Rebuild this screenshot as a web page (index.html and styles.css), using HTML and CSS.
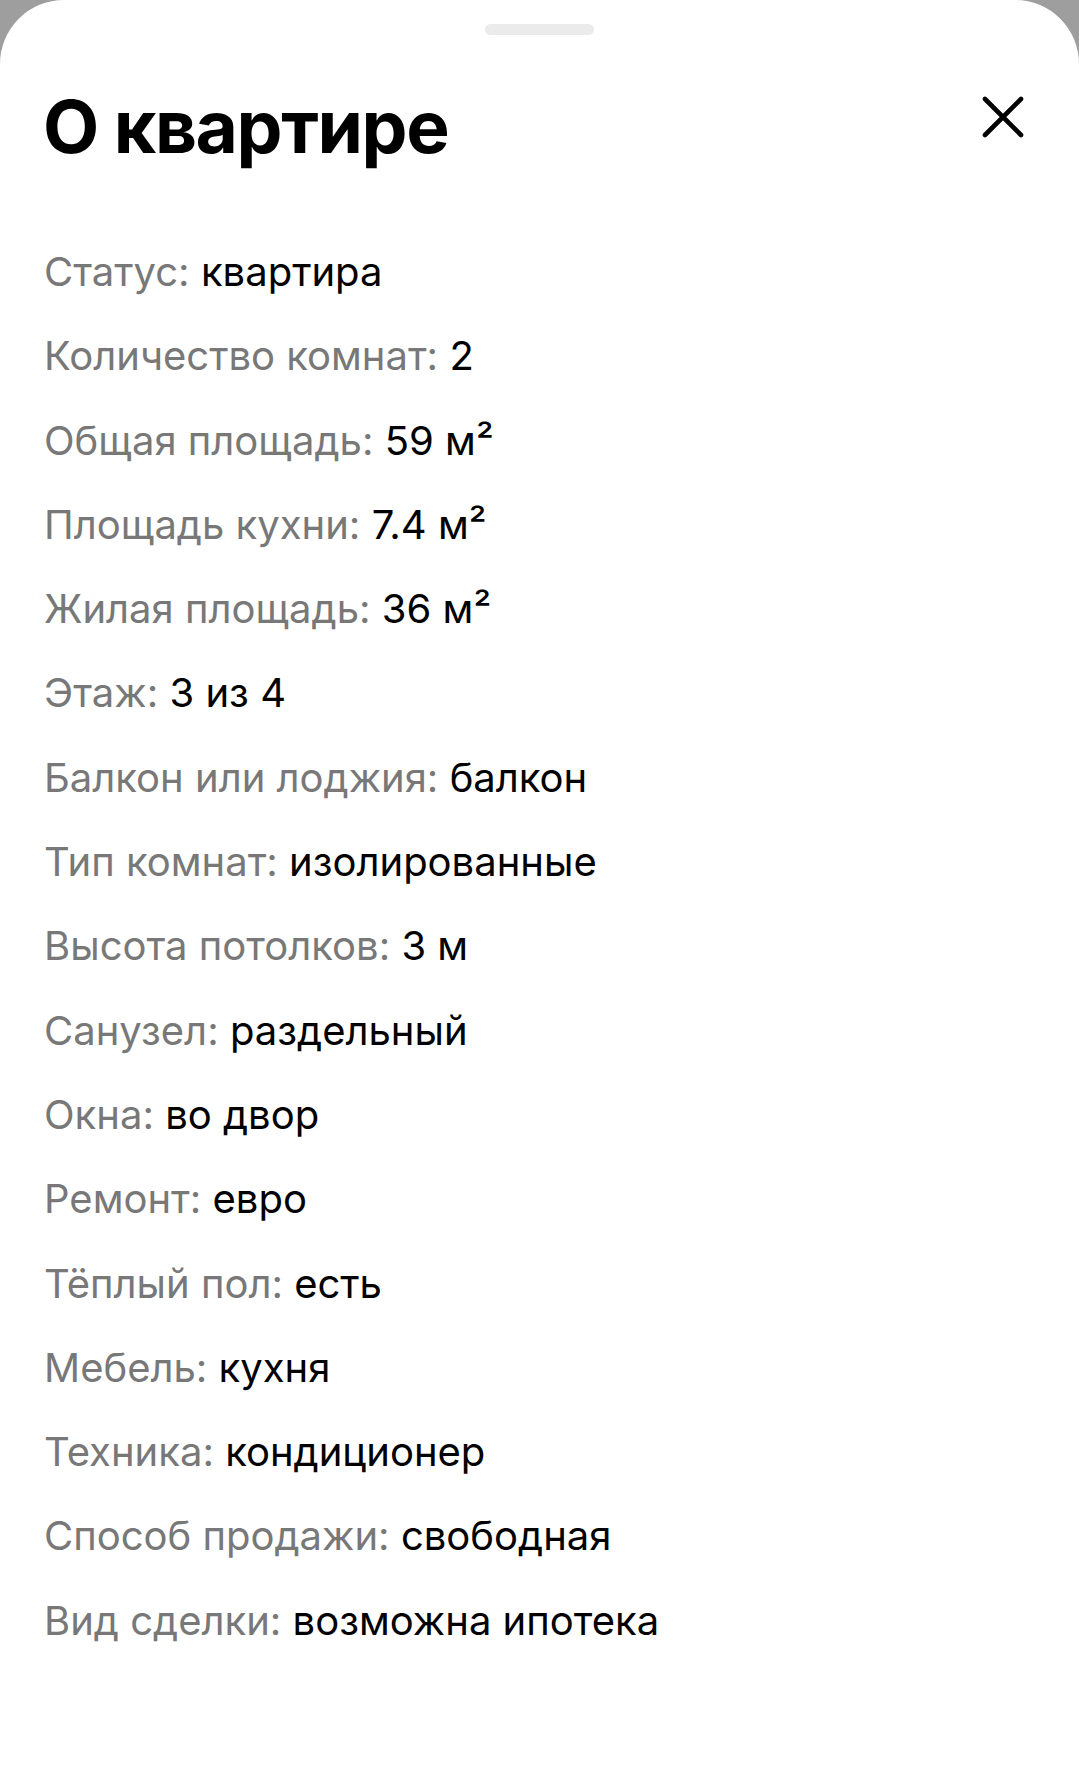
FILE: index.html
```html
<!DOCTYPE html>
<html lang="ru">
<head>
<meta charset="utf-8">
<title>О квартире</title>
<link rel="stylesheet" href="styles.css">
</head>
<body>
<div class="sheet">
  <div class="handle"></div>
  <div class="header">
    <h1 class="title">О квартире</h1>
    <button class="close" aria-label="Закрыть">
      <svg width="42" height="42" viewBox="0 0 42 42"><path d="M3 3 L39 39 M39 3 L3 39" stroke="#000" stroke-width="4.6" stroke-linecap="round" fill="none"/></svg>
    </button>
  </div>
  <ul class="params">
    <li><span class="label">Статус:</span> <span class="value">квартира</span></li>
    <li><span class="label">Количество комнат:</span> <span class="value">2</span></li>
    <li><span class="label">Общая площадь:</span> <span class="value">59 м²</span></li>
    <li><span class="label">Площадь кухни:</span> <span class="value">7.4 м²</span></li>
    <li><span class="label">Жилая площадь:</span> <span class="value">36 м²</span></li>
    <li><span class="label">Этаж:</span> <span class="value">3 из 4</span></li>
    <li><span class="label">Балкон или лоджия:</span> <span class="value">балкон</span></li>
    <li><span class="label">Тип комнат:</span> <span class="value">изолированные</span></li>
    <li><span class="label">Высота потолков:</span> <span class="value">3 м</span></li>
    <li><span class="label">Санузел:</span> <span class="value">раздельный</span></li>
    <li><span class="label">Окна:</span> <span class="value">во двор</span></li>
    <li><span class="label">Ремонт:</span> <span class="value">евро</span></li>
    <li><span class="label">Тёплый пол:</span> <span class="value">есть</span></li>
    <li><span class="label">Мебель:</span> <span class="value">кухня</span></li>
    <li><span class="label">Техника:</span> <span class="value">кондиционер</span></li>
    <li><span class="label">Способ продажи:</span> <span class="value">свободная</span></li>
    <li><span class="label">Вид сделки:</span> <span class="value">возможна ипотека</span></li>
  </ul>
</div>
</body>
</html>
```
FILE: styles.css
```css
html, body {
  margin: 0;
  padding: 0;
  background: #9e9e9e;
}
body {
  font-family: Inter, "Noto Sans", sans-serif;
}
.sheet {
  background: #fff;
  border-radius: 64px 64px 0 0;
  min-height: 1768px;
  padding-top: 24px;
  box-sizing: border-box;
}
.handle {
  width: 109px;
  height: 11px;
  border-radius: 6px;
  background: #ebebeb;
  margin: 0 auto;
}
.header {
  display: flex;
  justify-content: space-between;
  align-items: flex-start;
  margin-top: 48px;
  padding: 0 55px 0 43px;
}
.title {
  margin: 0;
  font-size: 73px;
  line-height: 87px;
  font-weight: 700;
  color: #000;
  letter-spacing: -1.4px;
}
.close {
  border: 0;
  background: none;
  padding: 0;
  margin-top: 13px;
  width: 42px;
  height: 42px;
  display: block;
}
.close svg { display: block; }
.params {
  list-style: none;
  margin: 60px 0 0;
  padding: 0 0 0 44px;
}
.params li {
  font-size: 40px;
  line-height: 84.3px;
  white-space: nowrap;
}
.label {
  color: #787878;
}
.value {
  color: #000;
}
```
